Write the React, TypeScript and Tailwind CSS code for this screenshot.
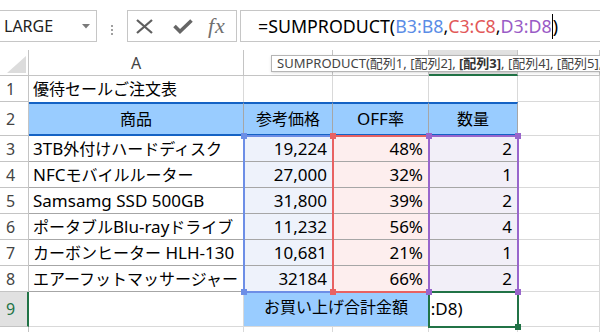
const items = [
  ['3TB外付けハードディスク', '19,224', '48%', '2'],
  ['NFCモバイルルーター', '27,000', '32%', '1'],
  ['Samsamg SSD 500GB', '31,800', '39%', '2'],
  ['ポータブルBlu-rayドライブ', '11,232', '56%', '4'],
  ['カーボンヒーター HLH-130', '10,681', '21%', '1'],
  ['エアーフットマッサージャー', '32184', '66%', '2'],
]

// latin runs a bit larger than the kana so widths line up with the sheet
function Mix({ s }: { s: string }) {
  return (
    <span>
      {s
        .split(/([\x20-\x7E]+)/)
        .filter(Boolean)
        .map((p, i) =>
          /^[\x20-\x7E]+$/.test(p) ? (
            <span key={i} className="text-[17px]">{p}</span>
          ) : (
            <span key={i} className="text-[16px]">{p}</span>
          ),
        )}
    </span>
  )
}

const handles: [number, number, string][] = [
  [244, 86, 'bg-[#6d8ee6]'],
  [244, 242, 'bg-[#6d8ee6]'],
  [333, 86, 'bg-[#e86262]'],
  [333, 242, 'bg-[#e86262]'],
  [429, 86, 'bg-[#9966cc]'],
  [518, 86, 'bg-[#9966cc]'],
  [429, 242, 'bg-[#9966cc]'],
  [518, 242, 'bg-[#9966cc]'],
]

const grid = 'border-r border-b border-[#d9d9d9]'
const rowHead = 'border-r border-b border-[#c4c4c4] pl-[6px] flex items-center text-[16px] text-[#444]'
const colHead = 'border-r border-b border-[#c4c4c4] flex items-center justify-center text-[16px] text-[#444]'

export default function App() {
  return (
    <div className="relative w-[600px] h-[332px] overflow-hidden bg-white text-black font-['Noto_Sans','Noto_Sans_CJK_JP',sans-serif]">
      {/* formula bar */}
      <div className="flex h-[50px] pt-[10px]">
        <div className="ml-[-1px] w-[98px] h-[32px] border border-[#c6c6c6] flex items-center justify-between pl-[4px] pr-[6px]">
          <span className="text-[16px] text-[#222]">LARGE</span>
          <svg width="8" height="5" viewBox="0 0 8 5">
            <polygon points="0,0 8,0 4,4.5" fill="#7a7a7a" />
          </svg>
        </div>
        <div className="w-[30px] flex flex-col items-center justify-center gap-[2px]">
          <div className="w-[2px] h-[2px] bg-[#a0a0a0]" />
          <div className="w-[2px] h-[2px] bg-[#a0a0a0]" />
          <div className="w-[2px] h-[2px] bg-[#a0a0a0]" />
        </div>
        <div className="w-[110px] h-[32px] border border-[#c6c6c6] flex items-center">
          <svg className="ml-[7px]" width="19" height="15" viewBox="0 0 19 15">
            <path d="M2 1 L17 14 M17 1 L2 14" stroke="#5f5f5f" strokeWidth="2.3" fill="none" />
          </svg>
          <svg className="ml-[19px]" width="20" height="15" viewBox="0 0 20 15">
            <polyline points="1.5,7 7,12.5 18.5,1.5" stroke="#666" strokeWidth="3.6" fill="none" />
          </svg>
          <span className="ml-[15px] text-[22px] leading-none tracking-[1px] italic text-[#707070] font-['Liberation_Serif',serif]">fx</span>
        </div>
        <div className="ml-[3px] flex-1 h-[32px] border border-r-0 border-[#c6c6c6] flex items-center pl-[17px] text-[17.8px] whitespace-nowrap">
          <span>=SUMPRODUCT(</span>
          <span className="text-[#5b8de6]">B3:B8</span>
          <span>,</span>
          <span className="text-[#e25858]">C3:C8</span>
          <span>,</span>
          <span className="text-[#9a5cc6]">D3:D8</span>
          <span className="inline-block w-[1px] h-[25px] bg-black" />
          <span>)</span>
        </div>
      </div>

      {/* sheet */}
      <div className="relative grid h-[282px] grid-cols-[29px_215px_89px_96px_89px_1fr] grid-rows-[26px_26px_34px_26px_26px_26px_26px_26px_26px_35px_1fr]">
        <div className="border-r border-b border-[#c4c4c4] flex items-end justify-end pr-[2px] pb-[2px]">
          <svg width="19" height="17" viewBox="0 0 19 17">
            <polygon points="0,17 19,17 19,0" fill="#dcdcdc" />
          </svg>
        </div>
        <div className={colHead}>A</div>
        <div className={colHead}>B</div>
        <div className={colHead}>C</div>
        <div className="border-r border-r-[#c4c4c4] border-b-2 border-b-[#217346] bg-[#e1e1e1] flex items-center justify-center text-[16px] text-[#217346]">D</div>
        <div className={colHead}>E</div>

        <div className={rowHead}>1</div>
        <div className="border-r border-[#d9d9d9] pl-[4px] flex items-center whitespace-nowrap">
          <Mix s="優待セールご注文表" />
        </div>
        <div className="border-r border-[#d9d9d9]" />
        <div className="border-r border-[#d9d9d9]" />
        <div className="border-r border-[#d9d9d9]" />
        <div className={grid} />

        <div className={rowHead}>2</div>
        {['商品', '参考価格', 'OFF率', '数量'].map((h) => (
          <div key={h} className="bg-[#99ccff] border-r border-r-[#a6a6a6] border-y-2 border-y-[#1462c4] flex items-center justify-center whitespace-nowrap">
            <Mix s={h} />
          </div>
        ))}
        <div className={grid} />

        {items.map(([name, price, off, qty], i) => (
          <div key={name} className="contents">
            <div className={rowHead}>{i + 3}</div>
            <div className="border-r border-b border-[#a6a6a6] pl-[4px] flex items-center whitespace-nowrap overflow-hidden">
              <Mix s={name} />
            </div>
            <div className="bg-[#eef2fb] border-r border-b border-[#a6a6a6] flex items-center justify-end pr-[5px] text-[17px]">{price}</div>
            <div className="bg-[#fdeeee] border-r border-b border-[#a6a6a6] flex items-center justify-end pr-[5px] text-[17px]">{off}</div>
            <div className="bg-[#f2eff8] border-r border-b border-[#a6a6a6] flex items-center justify-end pr-[5px] text-[17px]">{qty}</div>
            <div className={grid} />
          </div>
        ))}

        <div className="bg-[#e1e1e1] border-r-2 border-r-[#217346] border-b border-b-[#c4c4c4] pl-[6px] flex items-center text-[16px] text-[#217346]">9</div>
        <div className={grid} />
        <div className="col-span-2 bg-[#99ccff] border-r border-b border-[#d9d9d9] flex items-center justify-center pb-[4px] whitespace-nowrap">
          <Mix s="お買い上げ合計金額" />
        </div>
        <div className="border-r border-b border-[#d9d9d9] flex items-center overflow-hidden whitespace-nowrap">
          <span className="shrink-0 ml-[-8px] text-[17px]">3:D8)</span>
        </div>
        <div className={grid} />

        <div className="border-r border-[#c4c4c4]" />
        <div className="border-r border-[#d9d9d9]" />
        <div className="border-r border-[#d9d9d9]" />
        <div className="border-r border-[#d9d9d9]" />
        <div className="border-r border-[#d9d9d9]" />
        <div className="border-r border-[#d9d9d9]" />

        {/* range highlights from the formula being edited */}
        <div className="absolute left-[243px] top-[85px] w-[91px] h-[158px] border-2 border-[#6d8ee6]" />
        <div className="absolute left-[332px] top-[85px] w-[98px] h-[158px] border-2 border-[#e86262]" />
        <div className="absolute left-[428px] top-[85px] w-[91px] h-[158px] border-2 border-[#9966cc]" />
        <div className="absolute left-[428px] top-[241px] w-[91px] h-[37px] border-2 border-[#217346]" />
        {handles.map(([x, y, c]) => (
          <div key={`${x}-${y}`} className={`absolute w-[6px] h-[6px] ${c}`} style={{ left: x - 3, top: y - 3 }} />
        ))}
        <div className="absolute left-[515px] top-[274px] w-[6px] h-[6px] bg-[#217346]" />
      </div>

      {/* function tooltip */}
      <div className="absolute left-[271px] top-[55px] h-[17px] border border-[#b5b5b5] bg-white shadow-sm flex items-center pl-[5px] pr-[4px] text-[13px] text-[#444] whitespace-nowrap">
        <span>
          SUMPRODUCT(配列1, [配列2], <span className="font-bold text-[#333]">[配列3]</span>, [配列4], [配列5], [配列6], ...)
        </span>
      </div>
    </div>
  )
}
